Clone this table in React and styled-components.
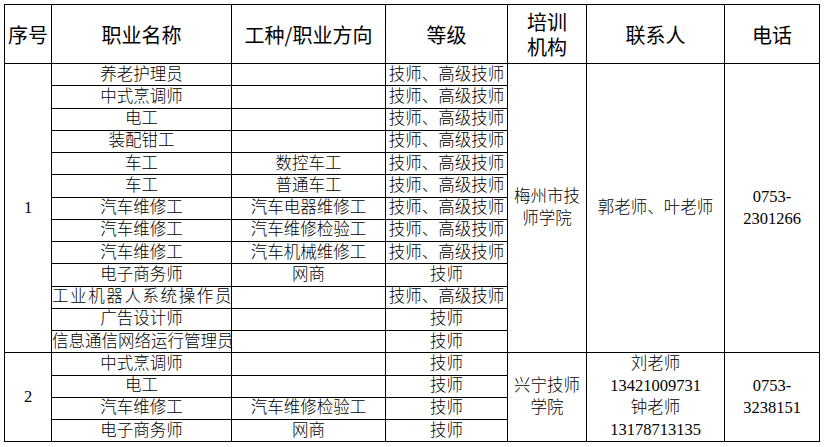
import React from "react";
import styled, { createGlobalStyle } from "styled-components";

const Global = createGlobalStyle`
  html, body { margin: 0; padding: 0; background: #fff; }
  body { font-family: "Liberation Serif", "Noto Sans CJK SC", serif; color: #000; }
`;

const Page = styled.div`
  padding: 4px;
`;

const Table = styled.table`
  border-collapse: collapse;
  table-layout: fixed;
  width: 815px;
  font-size: 16.5px;
  font-weight: 300;
`;

const HeadCell = styled.th`
  height: 58px;
  border: 1px solid #000;
  padding: 0;
  font-family: "Noto Sans CJK SC", sans-serif;
  font-weight: 400;
  font-size: 20px;
  line-height: 25px;
  text-align: center;
  vertical-align: middle;
`;

const Row = styled.tr`
  height: ${(p) => p.$h}px;
`;

const Cell = styled.td`
  border: 1px solid #000;
  padding: 0;
  text-align: ${(p) => (p.$left ? "left" : "center")};
  vertical-align: middle;
  white-space: ${(p) => (p.$wrap ? "normal" : "nowrap")};
  overflow: visible;
  line-height: ${(p) => (p.$wrap ? "22px" : "18px")};
  letter-spacing: ${(p) => (p.$spread ? "1.6px" : "0")};
`;

const group1 = [
  ["养老护理员", "", "技师、高级技师"],
  ["中式烹调师", "", "技师、高级技师"],
  ["电工", "", "技师、高级技师"],
  ["装配钳工", "", "技师、高级技师"],
  ["车工", "数控车工", "技师、高级技师"],
  ["车工", "普通车工", "技师、高级技师"],
  ["汽车维修工", "汽车电器维修工", "技师、高级技师"],
  ["汽车维修工", "汽车维修检验工", "技师、高级技师"],
  ["汽车维修工", "汽车机械维修工", "技师、高级技师"],
  ["电子商务师", "网商", "技师"],
  ["工业机器人系统操作员", "", "技师、高级技师"],
  ["广告设计师", "", "技师"],
  ["信息通信网络运行管理员", "", "技师"],
];

const group2 = [
  ["中式烹调师", "", "技师"],
  ["电工", "", "技师"],
  ["汽车维修工", "汽车维修检验工", "技师"],
  ["电子商务师", "网商", "技师"],
];

const groups = [
  {
    no: "1",
    rows: group1,
    h: 22.25,
    school: "梅州市技师学院",
    contact: ["郭老师、叶老师"],
    phone: ["0753-", "2301266"],
  },
  {
    no: "2",
    rows: group2,
    h: 21.85,
    school: "兴宁技师学院",
    contact: ["刘老师", "13421009731", "钟老师", "13178713135"],
    phone: ["0753-", "3238151"],
  },
];

const Lines = ({ items }) =>
  items.map((t, i) => (
    <React.Fragment key={i}>
      {i > 0 && <br />}
      {t}
    </React.Fragment>
  ));

export default function App() {
  return (
    <Page>
      <Global />
      <Table>
        <colgroup>
          <col style={{ width: 47 }} />
          <col style={{ width: 180 }} />
          <col style={{ width: 154 }} />
          <col style={{ width: 122 }} />
          <col style={{ width: 79 }} />
          <col style={{ width: 138 }} />
          <col style={{ width: 95 }} />
        </colgroup>
        <thead>
          <tr>
            <HeadCell>序号</HeadCell>
            <HeadCell>职业名称</HeadCell>
            <HeadCell>工种/职业方向</HeadCell>
            <HeadCell>等级</HeadCell>
            <HeadCell>
              培训
              <br />
              机构
            </HeadCell>
            <HeadCell>联系人</HeadCell>
            <HeadCell>电话</HeadCell>
          </tr>
        </thead>
        <tbody>
          {groups.map((g) =>
            g.rows.map((r, i) => (
              <Row key={g.no + "-" + i} $h={g.h}>
                {i === 0 && <Cell rowSpan={g.rows.length}>{g.no}</Cell>}
                <Cell
                  $left={r[0].length > 10}
                  $spread={r[0].length === 10}
                >
                  {r[0]}
                </Cell>
                <Cell>{r[1]}</Cell>
                <Cell>{r[2]}</Cell>
                {i === 0 && (
                  <>
                    <Cell rowSpan={g.rows.length} $wrap>
                      {g.school}
                    </Cell>
                    <Cell rowSpan={g.rows.length} $wrap>
                      <Lines items={g.contact} />
                    </Cell>
                    <Cell rowSpan={g.rows.length} $wrap>
                      <Lines items={g.phone} />
                    </Cell>
                  </>
                )}
              </Row>
            ))
          )}
        </tbody>
      </Table>
    </Page>
  );
}
